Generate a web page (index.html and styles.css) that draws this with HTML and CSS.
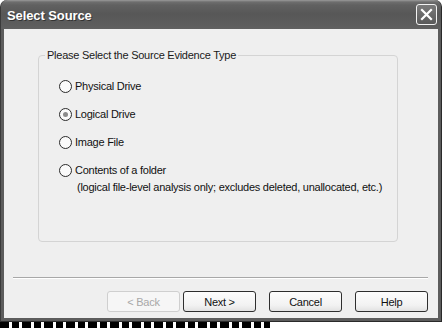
FILE: index.html
```html
<!DOCTYPE html>
<html>
<head>
<meta charset="utf-8">
<link rel="stylesheet" href="styles.css">
</head>
<body>
<div class="window">
  <div class="titlebar">
    <span class="title">Select Source</span>
    <span class="close">
      <svg width="13" height="13" viewBox="0 0 13 13"><path d="M2 2 L11 11 M11 2 L2 11" stroke="#fff" stroke-width="2.2" stroke-linecap="square"/></svg>
    </span>
  </div>
  <div class="client">
    <fieldset class="group">
      <legend>Please Select the Source Evidence Type</legend>
      <div class="opt"><span class="radio"></span>Physical Drive</div>
      <div class="opt"><span class="radio checked"></span>Logical Drive</div>
      <div class="opt"><span class="radio"></span>Image File</div>
      <div class="opt"><span class="radio"></span>Contents of a folder</div>
      <div class="note">(logical file-level analysis only; excludes deleted, unallocated, etc.)</div>
    </fieldset>
    <div class="sep"></div>
    <div class="buttons">
      <span class="btn disabled">&lt; Back</span>
      <span class="btn">Next &gt;</span>
      <span class="btn gap">Cancel</span>
      <span class="btn gap">Help</span>
    </div>
  </div>
</div>
<div class="strip"><div class="marks"></div></div>
</body>
</html>
```
FILE: styles.css
```css
html, body { margin: 0; padding: 0; }
body {
  width: 442px; height: 328px; overflow: hidden;
  background: #fff;
  font-family: "Liberation Sans", Arial, sans-serif;
  font-size: 11px; color: #000; letter-spacing: -0.25px;
}
.window {
  width: 442px; height: 322px; box-sizing: border-box;
  background: #5c5c5c;
  border-left: 1px solid #3a3a3a; border-right: 1px solid #2a2a2a; border-bottom: 1px solid #2a2a2a;
  border-radius: 7px 7px 0 0;
  display: flex; flex-direction: column;
  padding: 0 3px 3px 3px;
}
.titlebar {
  height: 29px; flex: none;
  display: flex; align-items: center; justify-content: space-between;
  padding: 0 3px 0 4px;
  margin: 0 -3px;
  background: linear-gradient(#9a9a9a 0, #6e6e6e 2px, #616161 5px, #575757 14px, #5c5c5c 24px, #606060 29px);
  border-radius: 7px 7px 0 0;
}
.title {
  color: #fff; font-weight: bold; font-size: 13px; letter-spacing: -0.1px;
  font-family: "Liberation Sans", Arial, sans-serif;
  text-shadow: 1px 1px 0 #333;
  padding-left: 2px; margin-top: 1px;
}
.close {
  width: 21px; height: 21px; box-sizing: border-box;
  border: 1px solid #f2f2f2; border-radius: 3px;
  background: linear-gradient(#7a7a7a, #5a5a5a);
  display: flex; align-items: center; justify-content: center;
  margin-right: 1px;
}
.client {
  flex: 1; background: #efefef;
  display: flex; flex-direction: column;
}
.group {
  margin: 20px 40px 0 34px; padding: 1px 0 0 20px;
  height: 193px; box-sizing: border-box;
  border: 1px solid #d4d4d4; border-radius: 4px;
}
.group legend {
  padding: 0 2px; margin-left: -14px; line-height: 13px; color: #1a1a1a;
}
.opt {
  display: flex; align-items: center; height: 14px; margin-top: 14px;
  color: #111;
}
.opt:first-of-type { margin-top: 16px; }
.radio {
  width: 13px; height: 13px; box-sizing: border-box; flex: none;
  border: 1px solid #2b2b2b; border-radius: 50%;
  background: #fafafa; margin-right: 3px;
  display: flex; align-items: center; justify-content: center;
}
.radio.checked::after {
  content: ""; width: 5px; height: 5px; border-radius: 50%; background: #8a8a8a;
}
.note { margin: 4px 0 0 18px; color: #111; white-space: nowrap; }
.sep {
  margin: 35px 10px 0 9px; height: 0;
  border-top: 1px solid #a8a8a8; border-bottom: 1px solid #fff;
}
.buttons {
  display: flex; justify-content: flex-end; margin: 12px 10px 0 0; gap: 3px;
}
.btn {
  width: 73px; height: 21px; box-sizing: border-box;
  border: 1px solid #2e2e2e; border-radius: 3px;
  background: linear-gradient(#fdfdfd, #f2f2f2 70%, #e2e2e2);
  display: flex; align-items: center; justify-content: center;
  color: #111;
}
.btn.gap { margin-left: 10px; }
.btn.disabled { border-color: #cfcfcf; color: #a8a8a8; background: #f6f6f6; }
.strip { height: 6px; background: #fff; }
.marks {
  width: 270px; height: 6px;
  background: repeating-linear-gradient(90deg, #000 0 9px, #fff 9px 12px, #000 12px 19px, #fff 19px 22px);
}
```
